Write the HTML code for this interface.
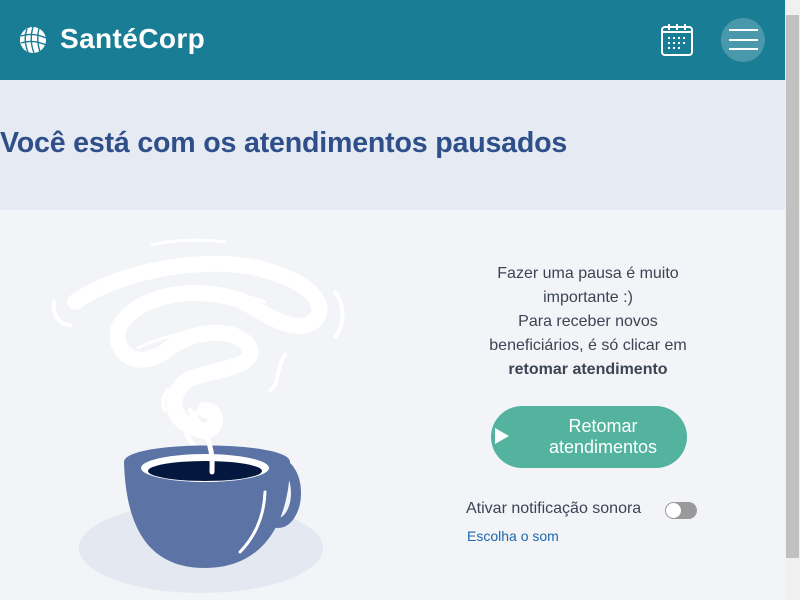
<!DOCTYPE html>
<html><head><meta charset="utf-8"><style>
*{margin:0;padding:0;box-sizing:border-box}
body{width:800px;height:600px;overflow:hidden;background:#f2f4f8;font-family:"Liberation Sans",sans-serif;position:relative}
.hdr{position:absolute;left:0;top:0;width:785px;height:80px;background:#1a7d96}
.band{position:absolute;left:0;top:80px;width:785px;height:130px;background:#e6ebf3}
h1{position:absolute;left:0;top:127px;font-size:28.6px;font-weight:bold;color:#2f4f8a;letter-spacing:-0.2px}
.sb{position:absolute;right:0;top:0;width:15px;height:600px;background:#f0f0f0}
.thumb{position:absolute;right:1px;top:15px;width:13px;height:543px;background:#c1c1c1}
.txt{position:absolute;left:470px;top:262px;width:236px;text-align:center;font-size:16px;line-height:24px;color:#3c4454}
.btn{position:absolute;left:491px;top:406px;width:196px;height:62px;border-radius:31px;background:#53b39e;color:#fff;font-size:18px;line-height:21px;text-align:center;padding-top:10px;padding-left:28px}
.tri{position:absolute;left:495px;top:428px;width:0;height:0;border-left:14px solid #fff;border-top:8px solid transparent;border-bottom:8px solid transparent}
.lbl{position:absolute;left:466px;top:500px;font-size:16px;color:#3c4454}
.tog{position:absolute;left:665px;top:502px;width:32px;height:17px;border-radius:9px;background:#9a9a9a}
.tog:after{content:"";position:absolute;left:1px;top:1px;width:15px;height:15px;border-radius:50%;background:#fff}
.lnk{position:absolute;left:467px;top:528px;font-size:14px;color:#1e67b0}
</style></head><body>
<div class="hdr">
<svg style="position:absolute;left:19px;top:26px" width="30" height="28" viewBox="0 0 30 28"><circle cx="14" cy="14" r="13" fill="#fff"/><g stroke="#1a7d96" stroke-width="1.4" fill="none"><path d="M2 10 Q14 6 27 12"/><path d="M2 17 Q14 13 27 19"/><path d="M8 3 Q4 14 9 26"/><path d="M14 1 Q10 14 15 27"/><path d="M20 2 Q17 14 21 26"/></g><line x1="33" y1="0" x2="33" y2="28" stroke="#fff" stroke-width="0.6"/></svg>
<div style="position:absolute;left:60px;top:23px;font-size:28px;font-weight:bold;color:#fff;letter-spacing:0.4px">SantéCorp</div>
<svg style="position:absolute;left:660px;top:22px" width="34" height="35" viewBox="0 0 34 35"><rect x="2" y="5" width="30" height="28" rx="3" fill="none" stroke="#fff" stroke-width="2"/><line x1="2" y1="10" x2="32" y2="10" stroke="#fff" stroke-width="2"/><g stroke="#fff" stroke-width="2"><line x1="9" y1="2" x2="9" y2="8"/><line x1="17" y1="2" x2="17" y2="8"/><line x1="25" y1="2" x2="25" y2="8"/></g><g fill="#fff"><rect x="8" y="15" width="2" height="2"/><rect x="13" y="15" width="2" height="2"/><rect x="18" y="15" width="2" height="2"/><rect x="23" y="15" width="2" height="2"/><rect x="8" y="20" width="2" height="2"/><rect x="13" y="20" width="2" height="2"/><rect x="18" y="20" width="2" height="2"/><rect x="23" y="20" width="2" height="2"/><rect x="8" y="25" width="2" height="2"/><rect x="13" y="25" width="2" height="2"/><rect x="18" y="25" width="2" height="2"/></g></svg>
<div style="position:absolute;left:721px;top:18px;width:44px;height:44px;border-radius:50%;background:#4a98ab"></div>
<div style="position:absolute;left:729px;top:29px;width:29px;height:2px;background:#fff"></div>
<div style="position:absolute;left:729px;top:39px;width:29px;height:2px;background:#fff"></div>
<div style="position:absolute;left:729px;top:48px;width:29px;height:2px;background:#fff"></div>
</div>
<div class="band"></div>
<h1>Você está com os atendimentos pausados</h1>
<svg style="position:absolute;left:40px;top:230px" width="330" height="370" viewBox="0 0 330 370">
<ellipse cx="161" cy="318" rx="122" ry="45" fill="#e4e9f1"/>
<g fill="none" stroke="#fff" stroke-linecap="round">
<path d="M35 72 C80 40 180 20 240 45 C280 60 285 80 275 90 C255 108 220 80 200 70 C150 55 100 65 80 95 C70 120 95 145 130 118 C160 95 205 100 210 120 C215 140 160 140 145 152 C125 170 135 195 160 200 C178 205 180 180 165 180" stroke-width="16"/>
<path d="M165 180 C130 190 150 215 165 225 C175 235 172 252 172 262" stroke-width="5"/>
<path d="M112 15 C140 8 170 10 185 12" stroke-width="3"/>
<path d="M125 63 C160 58 200 62 225 72" stroke-width="3"/>
<path d="M14 72 C12 85 20 95 30 95" stroke-width="4"/>
<path d="M295 62 C305 75 305 95 295 107" stroke-width="4"/>
<path d="M245 125 C235 140 240 155 230 160" stroke-width="4"/>
<path d="M128 160 C122 168 122 175 125 180" stroke-width="4"/>
<path d="M98 118 C110 112 130 105 150 102" stroke-width="3"/>
</g>
<ellipse cx="238" cy="263" rx="18" ry="30" fill="none" stroke="#5c74a5" stroke-width="10"/>
<path d="M84 232 C84 210 250 210 250 232 C250 290 225 338 165 338 C110 338 86 300 84 232 Z" fill="#5c74a5"/>
<path d="M225 262 C224 290 212 310 200 322" fill="none" stroke="#fff" stroke-width="3" stroke-linecap="round"/>
<ellipse cx="165" cy="238" rx="64" ry="14" fill="#fff"/>
<ellipse cx="165" cy="241" rx="57" ry="10" fill="#04173f"/>
<path d="M150 180 C175 210 172 230 172 242" fill="none" stroke="#fff" stroke-width="5" stroke-linecap="round"/>
</svg>
<div class="txt">Fazer uma pausa é muito<br>importante :)<br>Para receber novos<br>beneficiários, é só clicar em<br><b>retomar atendimento</b></div>
<div class="btn">Retomar<br>atendimentos</div>
<div class="tri"></div>
<div class="lbl">Ativar notificação sonora</div>
<div class="tog"></div>
<div class="lnk">Escolha o som</div>
<div class="sb"><div class="thumb"></div></div>
</body></html>
